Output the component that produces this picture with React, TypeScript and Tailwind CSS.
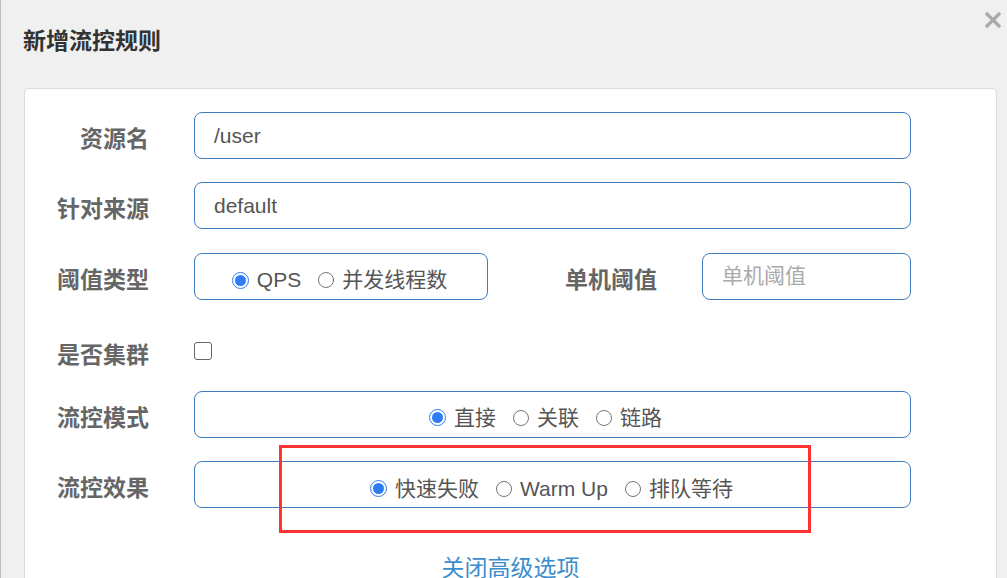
import React from "react";

const FONT = { fontFamily: '"Liberation Sans", "Noto Sans CJK SC", sans-serif' };

function Radio({ checked, label }: { checked?: boolean; label: string }) {
  return (
    <span className="flex items-center">
      {checked ? (
        <span className="w-[17px] h-[17px] rounded-full border border-[#2f7cf6] bg-white flex items-center justify-center">
          <span className="w-[11px] h-[11px] rounded-full bg-[#2f7cf6]" />
        </span>
      ) : (
        <span className="w-[16px] h-[16px] rounded-full border border-[#767676] bg-white" />
      )}
      <span className="ml-[8px] text-[21px] text-[#555]">{label}</span>
    </span>
  );
}

function Label({ children }: { children: React.ReactNode }) {
  return (
    <div className="w-[124px] shrink-0 text-right text-[23px] font-bold text-[#666] pt-[8px]">
      {children}
    </div>
  );
}

export default function App() {
  return (
    <div style={FONT} className="relative w-[1007px] h-[578px] overflow-hidden bg-[#f0f0f0] border-l border-[#bdbdbd]">
      <div className="h-[88px] flex items-start">
        <div className="mt-[26px] ml-[22px] text-[23px] font-bold text-[#333] leading-[30px]">新增流控规则</div>
        <div className="ml-auto mr-[4px] mt-[10px] text-[#aaa]">
          <svg width="20" height="20" viewBox="0 0 20 20">
            <path d="M3 3 L17 17 M17 3 L3 17" stroke="#aaa" strokeWidth="3.2" strokeLinecap="butt" />
          </svg>
        </div>
      </div>
      <div className="ml-[23px] w-[973px] h-[520px] bg-white border border-[#dcdcdc] rounded-[5px] pt-[23px]">
        <div className="flex items-center h-[47px]">
          <Label>资源名</Label>
          <div className="ml-[45px] w-[717px] h-[47px] border border-[#3f7cc0] rounded-[8px] flex items-center pl-[19px] text-[21px] text-[#555]">/user</div>
        </div>
        <div className="flex items-center h-[47px] mt-[23px]">
          <Label>针对来源</Label>
          <div className="ml-[45px] w-[717px] h-[47px] border border-[#3f7cc0] rounded-[8px] flex items-center pl-[19px] text-[21px] text-[#555]">default</div>
        </div>
        <div className="flex items-center h-[47px] mt-[24px]">
          <Label>阈值类型</Label>
          <div className="ml-[45px] w-[294px] h-[47px] border border-[#3f7cc0] rounded-[8px] flex items-center justify-center gap-[17px] pt-[7px] pr-[3px]">
            <Radio checked label="QPS" />
            <Radio label="并发线程数" />
          </div>
          <div className="w-[169px] text-right text-[23px] font-bold text-[#666] pt-[8px]">单机阈值</div>
          <div className="ml-[45px] w-[209px] h-[47px] border border-[#3f7cc0] rounded-[8px] flex items-center pl-[19px] pb-[2px] text-[21px] text-[#aaa]">单机阈值</div>
        </div>
        <div className="flex items-center h-[46px] mt-[28px] mb-[17px]">
          <Label>是否集群</Label>
          <div className="ml-[45px] w-[18px] h-[18px] border border-[#666] rounded-[3px] bg-white -mt-[1px]" />
        </div>
        <div className="flex items-center h-[47px]">
          <Label>流控模式</Label>
          <div className="ml-[45px] w-[717px] h-[47px] border border-[#3f7cc0] rounded-[8px] flex items-center justify-center gap-[17px] pt-[6px] pr-[14px]">
            <Radio checked label="直接" />
            <Radio label="关联" />
            <Radio label="链路" />
          </div>
        </div>
        <div className="flex items-center h-[47px] mt-[23px]">
          <Label>流控效果</Label>
          <div className="ml-[45px] w-[717px] h-[47px] border border-[#3f7cc0] rounded-[8px] flex items-center justify-center gap-[17px] pt-[8px] pr-[2px]">
            <Radio checked label="快速失败" />
            <Radio label="Warm Up" />
            <Radio label="排队等待" />
          </div>
        </div>
        <div className="mt-[44px] flex justify-center">
          <span className="text-[23px] text-[#3c8dcb] leading-[32px]">关闭高级选项</span>
        </div>
      </div>
      <div className="absolute left-[278px] top-[445px] w-[532px] h-[88px] border-[3px] border-[#f33] pointer-events-none" />
    </div>
  );
}
